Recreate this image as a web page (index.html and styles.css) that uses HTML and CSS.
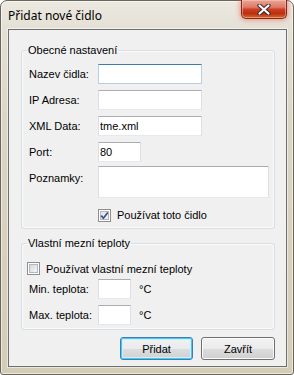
FILE: index.html
```html
<!DOCTYPE html>
<html lang="cs">
<head>
    <meta charset="UTF-8">
    <meta name="viewport" content="width=device-width, initial-scale=1.0">
    <title>Přidat nové čidlo</title>
    <link rel="stylesheet" href="styles.css">
</head>
<body>

<div class="window">
    <div class="titlebar">
        <span class="title">Přidat nové čidlo</span>
        <button class="close" type="button" aria-label="Zavřít">
            <svg width="14" height="11" viewBox="0 0 14 11">
                <path d="M2.5 1.5 L11.5 9.5 M11.5 1.5 L2.5 9.5" stroke="#3a2a30" stroke-width="4.2" stroke-linecap="round"/>
                <path d="M2.5 1.5 L11.5 9.5 M11.5 1.5 L2.5 9.5" stroke="#ffffff" stroke-width="2.2" stroke-linecap="round"/>
            </svg>
        </button>
    </div>

    <div class="client">
        <fieldset class="group">
            <legend>Obecné nastavení</legend>
            <div class="form general">
                <label for="name">Nazev čidla:</label>
                <input type="text" id="name" class="field wide focus">

                <label for="ip">IP Adresa:</label>
                <input type="text" id="ip" class="field wide">

                <label for="xml">XML Data:</label>
                <input type="text" id="xml" class="field wide" value="tme.xml">

                <label for="port">Port:</label>
                <input type="text" id="port" class="field port" value="80">

                <label for="notes" class="top">Poznamky:</label>
                <textarea id="notes" class="field notes"></textarea>

                <div class="check-row enabled">
                    <span class="check checked">
                        <svg width="9" height="9" viewBox="0 0 9 9">
                            <path d="M1.2 4.6 L3.4 7.2 L7.8 1.4" fill="none" stroke="#3a4f91" stroke-width="1.7"/>
                        </svg>
                    </span>
                    <span>Používat toto čidlo</span>
                </div>
            </div>
        </fieldset>

        <fieldset class="group limits">
            <legend>Vlastní mezní teploty</legend>
            <div class="form temps">
                <div class="check-row custom">
                    <span class="check"></span>
                    <span>Používat vlastní mezní teploty</span>
                </div>

                <label for="tmin">Min. teplota:</label>
                <input type="text" id="tmin" class="field temp">
                <span class="unit">°C</span>

                <label for="tmax">Max. teplota:</label>
                <input type="text" id="tmax" class="field temp">
                <span class="unit">°C</span>
            </div>
        </fieldset>

        <div class="buttons">
            <button type="button" class="btn default">Přidat</button>
            <button type="button" class="btn close-btn">Zavřít</button>
        </div>
    </div>
</div>

</body>
</html>
```

FILE: styles.css
```css
body {
    margin: 0;
    padding: 0;
    background-color: #fff;
    font-family: "Liberation Sans", Arial, sans-serif;
    font-size: 11px;
    color: #000;
}

.window {
    width: 294px;
    height: 375px;
    box-sizing: border-box;
    border: 1px solid #6a665c;
    border-radius: 7px 7px 3px 3px;
    padding: 0 6px 7px 7px;
    display: flex;
    flex-direction: column;
    background: linear-gradient(#ece9e1 0px, #e4e0d5 28px, #dbd5c4 120px, #d3ccb7 100%);
    box-shadow: inset 0 0 0 1px rgba(255, 255, 255, 0.55);
}

.titlebar {
    height: 28px;
    display: flex;
    justify-content: space-between;
    align-items: flex-start;
}

.title {
    font-family: "Noto Sans", "DejaVu Sans", sans-serif;
    font-size: 12px;
    line-height: 16px;
    padding: 7px 0 0 0;
    color: #000;
}

.close {
    width: 46px;
    height: 19px;
    margin-top: -1px;
    padding: 0;
    border: 1px solid #7a2b23;
    border-top: none;
    border-radius: 0 0 5px 5px;
    background: linear-gradient(#eba595 0%, #df7a66 40%, #cc3f27 52%, #bb2e0e 75%, #d86a2a 100%);
    box-shadow: 0 0 5px 1px rgba(240, 90, 60, 0.6), inset 0 0 0 1px rgba(255, 210, 200, 0.45);
    display: flex;
    align-items: center;
    justify-content: center;
}

.client {
    flex: 1;
    background-color: #f0f0f0;
    border: 1px solid #6f6f6f;
    padding: 14px 11px 0 12px;
    box-shadow: 0 0 0 1px rgba(255, 255, 255, 0.5);
}

.group {
    margin: 0;
    padding: 0 7px 6px 7px;
    border: 1px solid #d5dfe5;
    border-radius: 3px;
    box-shadow: inset 0 0 0 1px #fafafa;
    min-width: 0;
}

.group legend {
    padding: 0 1px;
    margin-left: -2px;
    line-height: 13px;
}

.limits {
    margin-top: 8px;
    padding-bottom: 4px;
}

.form {
    display: grid;
    align-items: center;
    row-gap: 6px;
}

.general {
    grid-template-columns: 69px 1fr;
    margin-top: 7px;
}

.temps {
    grid-template-columns: 69px 41px 1fr;
    margin-top: 12px;
}

label {
    line-height: 13px;
}

label.top {
    align-self: start;
    padding-top: 4px;
}

.field {
    box-sizing: border-box;
    height: 20px;
    margin: 0;
    padding: 0 1px;
    font-family: "Liberation Sans", Arial, sans-serif;
    font-size: 11px;
    color: #000;
    background-color: #fff;
    border: 1px solid #dbdfe6;
    border-top-color: #abadb3;
    border-bottom-color: #e3e9ef;
    border-radius: 0;
    outline: none;
}

.field.focus {
    border-color: #b5cfe7;
    border-top-color: #3d7bad;
}

.wide {
    width: 104px;
}

.port {
    width: 43px;
}

.notes {
    width: 171px;
    height: 32px;
    margin-top: -2px;
    resize: none;
}

.temp {
    width: 33px;
}

.unit {
    line-height: 13px;
}

.check-row {
    display: flex;
    align-items: center;
    gap: 6px;
    height: 14px;
}

.enabled {
    grid-column: 2;
    margin-top: 4px;
}

.custom {
    grid-column: 1 / -1;
    margin-left: -2px;
    margin-bottom: -2px;
    height: 13px;
}

.check {
    box-sizing: border-box;
    width: 13px;
    height: 13px;
    border: 1px solid #8e8f8f;
    background: linear-gradient(135deg, #cbcfd5 0%, #eef0f2 70%, #f6f6f6 100%);
    box-shadow: inset 0 0 0 1px #fff, inset 0 0 0 2px #b3b8be;
    display: flex;
    align-items: center;
    justify-content: center;
}

.check.checked {
    background: linear-gradient(135deg, #dfe2e6 0%, #f2f3f4 100%);
}

.buttons {
    margin-top: 7px;
    display: flex;
    justify-content: flex-end;
    gap: 8px;
}

.btn {
    height: 23px;
    padding: 0;
    font-family: "Liberation Sans", Arial, sans-serif;
    font-size: 11px;
    color: #000;
    border: 1px solid #707070;
    border-radius: 3px;
    background: linear-gradient(#f2f2f2 0%, #ebebeb 50%, #dddddd 51%, #cfcfcf 100%);
    box-shadow: inset 0 0 0 1px #fbfbfb;
}

.btn.default {
    width: 73px;
    border-color: #3c7fb1;
    background: linear-gradient(#f1f2f3 0%, #eaebec 50%, #dcdddf 51%, #cfd1d3 100%);
    box-shadow: inset 0 0 0 1px #48c8f0, inset 0 0 0 2px #d4eef9;
}

.btn.close-btn {
    width: 74px;
}
```
